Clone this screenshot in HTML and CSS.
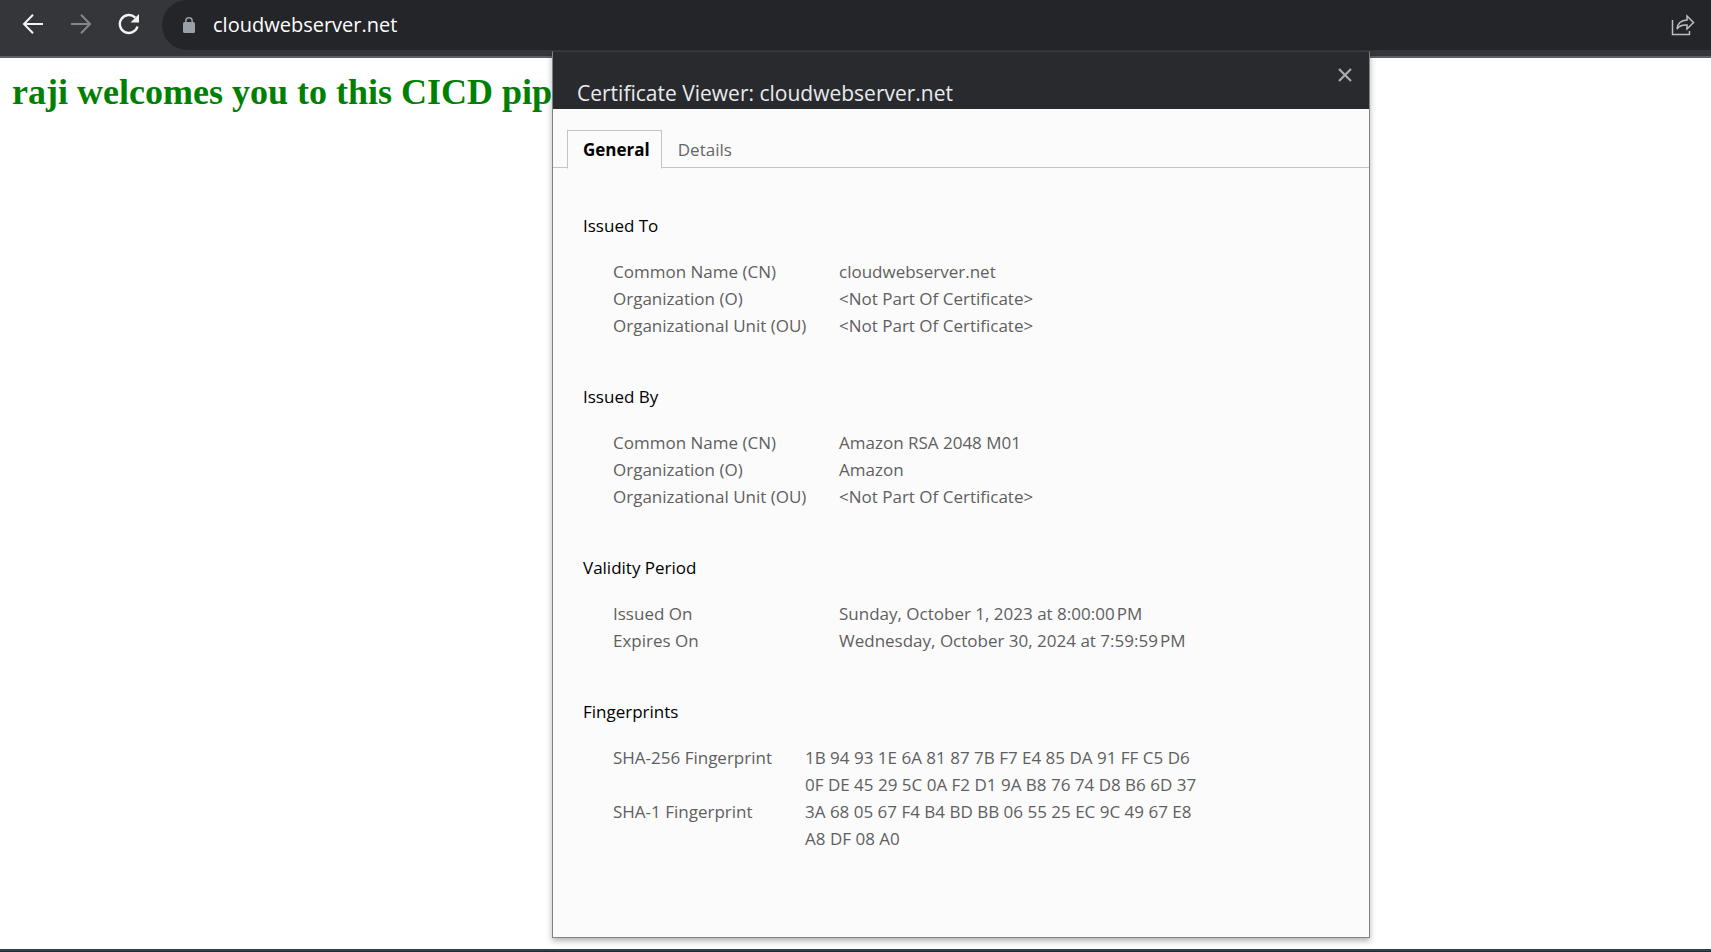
FILE: index.html
```html
<!DOCTYPE html>
<html lang="en">
<head>
<meta charset="utf-8">
<title>cloudwebserver.net</title>
<link rel="stylesheet" href="styles.css">
</head>
<body>
<header class="toolbar">
  <nav class="nav" aria-label="Navigation">
    <button class="icon-btn" type="button" aria-label="Back">
      <svg width="22" height="22" viewBox="0 0 22 22" fill="none" stroke="currentColor" stroke-width="2"><path d="M21 11H2.500M11 1.800L2 11l9 9.200"/></svg>
    </button>
    <button class="icon-btn icon-btn-off" type="button" aria-label="Forward">
      <svg width="22" height="22" viewBox="0 0 22 22" fill="none" stroke="currentColor" stroke-width="2"><path d="M1 11h18.500M11 1.800L20 11l-9 9.200"/></svg>
    </button>
    <button class="icon-btn" type="button" aria-label="Reload">
      <svg width="22" height="22" viewBox="0 0 22 22"><path d="M19.500 13.500A9 9 0 1 1 17.300 4.700" fill="none" stroke="currentColor" stroke-width="2.400"/><path d="M21 1v8.500h-8.500z" fill="currentColor"/></svg>
    </button>
  </nav>
  <div class="omnibox">
    <svg class="lock" width="12" height="16" viewBox="0 0 12 16"><rect y="5" width="12" height="11" rx="1.500" fill="currentColor"/><path d="M2.800 6V4a3.200 3.200 0 0 1 6.400 0v2" fill="none" stroke="currentColor" stroke-width="1.500"/></svg>
    <input class="address" type="text" aria-label="Address" value="cloudwebserver.net" spellcheck="false">
    <button class="icon-btn share" type="button" aria-label="Share">
      <svg width="24" height="22" viewBox="0 0 24 22" fill="none" stroke="currentColor" stroke-width="1.500"><path d="M1.500 6v14.500h17V17"/><path d="M16 2l6.500 6.500L16 15v-4c-5-.3-8 .8-10 4C6.500 9.500 10 6.300 16 6z"/></svg>
    </button>
  </div>
</header>
<main class="page">
  <h1 class="welcome">raji welcomes you to this CICD pip</h1>
</main>
<div class="taskbar"></div>

<section class="dialog" role="dialog" aria-labelledby="dialog-title">
  <header class="dialog-head">
    <h2 class="dialog-title" id="dialog-title">Certificate Viewer: cloudwebserver.net</h2>
    <button class="close" type="button" aria-label="Close">
      <svg width="14" height="14" viewBox="0 0 14 14" fill="none" stroke="currentColor" stroke-width="2.200"><path d="M1 1l12 12M13 1L1 13"/></svg>
    </button>
  </header>
  <div class="tabs" role="tablist">
    <button class="tab tab-active" type="button" role="tab" aria-selected="true">General</button>
    <button class="tab" type="button" role="tab" aria-selected="false">Details</button>
  </div>
  <div class="details">
    <section class="group">
      <h3 class="group-title">Issued To</h3>
      <dl class="fields">
        <dt>Common Name (CN)</dt><dd>cloudwebserver.net</dd>
        <dt>Organization (O)</dt><dd>&lt;Not Part Of Certificate&gt;</dd>
        <dt>Organizational Unit (OU)</dt><dd>&lt;Not Part Of Certificate&gt;</dd>
      </dl>
    </section>
    <section class="group">
      <h3 class="group-title">Issued By</h3>
      <dl class="fields">
        <dt>Common Name (CN)</dt><dd>Amazon RSA 2048 M01</dd>
        <dt>Organization (O)</dt><dd>Amazon</dd>
        <dt>Organizational Unit (OU)</dt><dd>&lt;Not Part Of Certificate&gt;</dd>
      </dl>
    </section>
    <section class="group">
      <h3 class="group-title">Validity Period</h3>
      <dl class="fields">
        <dt>Issued On</dt><dd>Sunday, October 1, 2023 at 8:00:00&#8239;PM</dd>
        <dt>Expires On</dt><dd>Wednesday, October 30, 2024 at 7:59:59&#8239;PM</dd>
      </dl>
    </section>
    <section class="group">
      <h3 class="group-title">Fingerprints</h3>
      <dl class="fields fields-hash">
        <dt>SHA-256 Fingerprint</dt><dd>1B 94 93 1E 6A 81 87 7B F7 E4 85 DA 91 FF C5 D6<br>0F DE 45 29 5C 0A F2 D1 9A B8 76 74 D8 B6 6D 37</dd>
        <dt>SHA-1 Fingerprint</dt><dd>3A 68 05 67 F4 B4 BD BB 06 55 25 EC 9C 49 67 E8<br>A8 DF 08 A0</dd>
      </dl>
    </section>
  </div>
</section>
</body>
</html>
```
FILE: styles.css
```css
* { box-sizing: border-box; }

body {
  margin: 0;
  min-height: 100vh;
  display: flex;
  flex-direction: column;
  background: #fff;
  font-family: "Open Sans", "Noto Sans", sans-serif;
}

h1, h2, h3, dl, dd { margin: 0; }

button {
  padding: 0;
  border: 0;
  background: none;
  font: inherit;
  color: inherit;
}

svg { display: block; }

.toolbar {
  display: flex;
  height: 58px;
  padding-bottom: 6px;
  background: #35363a;
  border-bottom: 2px solid #5f6065;
}

.nav {
  display: flex;
  align-items: center;
  gap: 26px;
  padding: 0 22px 2px 22px;
}

.icon-btn { color: #f1f3f4; }
.icon-btn-off { color: #85868a; }

.omnibox {
  flex: 1;
  display: flex;
  align-items: center;
  padding: 0 16px 0 21px;
  background: #242528;
  border-radius: 25px 0 0 25px;
}

.lock { color: #9aa0a6; }

.address {
  flex: 1;
  min-width: 0;
  margin-left: 16px;
  padding: 0 2px;
  border: 0;
  outline: 0;
  background: none;
  color: #fff;
  font-family: inherit;
  font-size: 20px;
  line-height: 28px;
}

.share { color: #bdbec0; }

.page {
  flex: 1;
  padding: 13px 12px;
}

.welcome {
  color: #008000;
  font-family: "Liberation Serif", serif;
  font-size: 36px;
  line-height: 42px;
  white-space: nowrap;
}

.taskbar {
  height: 3px;
  background: #1c2b33;
  border-top: 2px solid #32424a;
}

.dialog {
  position: absolute;
  top: 51px;
  left: 552px;
  right: 341px;
  bottom: 14px;
  border: 1px solid #808384;
  border-top-color: #3a3b3f;
  background: #fbfbfb;
  box-shadow: 0 3px 6px rgba(0, 0, 0, 0.3);
}

.dialog-head {
  display: flex;
  justify-content: space-between;
  align-items: flex-start;
  height: 57px;
  padding: 16px 17px 0 24px;
  background: #292a2d;
}

.dialog-title {
  padding-top: 10px;
  color: #e8eaed;
  font-size: 21px;
  font-weight: 400;
  line-height: 30px;
}

.close { color: #a9acb0; }

.tabs {
  display: flex;
  height: 59px;
  padding: 21px 0 0 14px;
  border-bottom: 1px solid #c3c3c3;
}

.tab {
  height: 39px;
  padding: 0 11px 0 15px;
  border: 1px solid transparent;
  color: #666;
  font-size: 17px;
}

.tab-active {
  border-color: #c3c3c3;
  border-bottom-color: #fbfbfb;
  background: #fbfbfb;
  color: #000;
  font-weight: 700;
}

.details {
  display: flex;
  flex-direction: column;
  gap: 44px;
  padding: 44px 30px 0;
  font-size: 17px;
  line-height: 27px;
}

.group {
  display: flex;
  flex-direction: column;
  gap: 19px;
}

.group-title {
  color: #000;
  font-size: 17px;
  font-weight: 400;
}

.fields {
  display: grid;
  grid-template-columns: 226px 1fr;
  padding-left: 30px;
  color: #5f5f5f;
}

.fields-hash { grid-template-columns: 192px 1fr; }
```
